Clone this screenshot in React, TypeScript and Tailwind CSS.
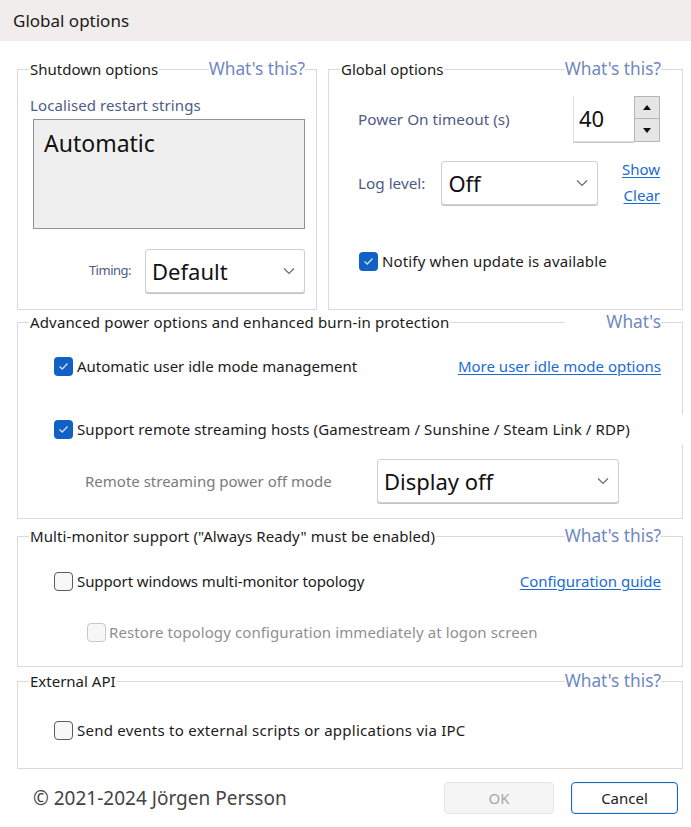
import React from 'react';

const Chevron = () => (
  <svg width="12" height="8" viewBox="0 0 12 8" className="shrink-0">
    <polyline points="1,1.5 6,6.5 11,1.5" fill="none" stroke="#6b6b6b" strokeWidth="1.2" />
  </svg>
);

const Select = ({ value, className }: { value: string; className: string }) => (
  <div
    className={`flex items-center justify-between h-[44px] bg-white border border-[#d0d0d0] rounded-[3px] shadow-[0_1px_0_#c4c4c4] pl-[6px] pr-[9px] ${className}`}
  >
    <span className="text-[22px] text-[#111] leading-none">{value}</span>
    <Chevron />
  </div>
);

const Check = ({ checked, disabled }: { checked?: boolean; disabled?: boolean }) =>
  checked ? (
    <div className="w-[19px] h-[19px] rounded-[4px] bg-[#1160c4] flex items-center justify-center shrink-0">
      <svg width="11" height="9" viewBox="0 0 11 9">
        <polyline points="1.5,4.5 4.2,7 9.5,1.5" fill="none" stroke="#cfe0f5" strokeWidth="1.3" />
      </svg>
    </div>
  ) : (
    <div
      className={`w-[19px] h-[19px] rounded-[4px] shrink-0 border ${
        disabled ? 'border-[#c8c8c8] bg-[#f7f7f7]' : 'border-[#5c5c5c] bg-[#f8f8f8]'
      }`}
    />
  );

const GroupBox = ({
  title,
  help,
  helpClass = '',
  titleClass = '',
  className,
  children,
}: {
  title: string;
  help: string;
  helpClass?: string;
  titleClass?: string;
  className: string;
  children: React.ReactNode;
}) => (
  <div className={`border border-[#dadada] ${className}`}>
    <div className="flex items-center justify-between h-[22px] -mt-[12px] leading-[22px]">
      <span className={`ml-[11px] px-[1px] bg-white text-[15px] text-[#1b1b1b] ${titleClass}`}>{title}</span>
      <span className={`bg-white text-[17.3px] text-[#6f88bf] ${helpClass}`}>{help}</span>
    </div>
    {children}
  </div>
);

const Link = ({ children }: { children: React.ReactNode }) => (
  <span className="text-[15px] text-[#1b6bd4] underline underline-offset-[2px] decoration-[1px]">{children}</span>
);

const App = () => {
  return (
    <div className="w-[691px] h-[827px] bg-white overflow-hidden font-['Noto_Sans',sans-serif]">
      {/* Title bar */}
      <div className="h-[41px] bg-[#f2eded] flex items-center pl-[13px]">
        <span className="text-[17px] text-[#1a1a1a]">Global options</span>
      </div>

      <div className="pl-[17px] w-[683px]">
        {/* Top row */}
        <div className="flex gap-[11px] mt-[28px]">
          <GroupBox title="Shutdown options" help="What's this?" helpClass="mr-[11px]" className="w-[300px] h-[241px]">
            <div className="mt-[15px] ml-[12px] text-[15px] leading-[20px] text-[#4e5b84] tracking-[0.1px]">Localised restart strings</div>
            <div className="mt-[4px] ml-[15px] w-[272px] h-[110px] bg-[#efefef] border border-[#8e9296] pl-[10px] pt-[6px]">
              <span className="text-[23px] text-[#111]">Automatic</span>
            </div>
            <div className="mt-[20px] flex items-center justify-end gap-[14px] pr-[11px]">
              <span className="text-[13px] text-[#4e5b84] tracking-[-0.5px]">Timing:</span>
              <Select value="Default" className="w-[160px]" />
            </div>
          </GroupBox>

          <GroupBox title="Global options" help="What's this?" helpClass="mr-[21px]" className="w-[355px] h-[241px]">
            <div className="mt-[16px] flex items-center justify-between pl-[29px] pr-[22px]">
              <span className="text-[15.3px] text-[#4e5b84]">Power On timeout (s)</span>
              <div className="flex h-[46px]">
                <div className="w-[61px] h-[46px] bg-white border-l border-b border-[#e0e0e0] shadow-[0_1px_0_#c4c4c4] flex items-center pl-[5px]">
                  <span className="text-[22px] text-[#111]">40</span>
                </div>
                <div className="flex flex-col w-[26px] border border-[#b5b5b5] bg-[#f2f2f2]">
                  <div className="h-[22px] border-b border-[#b5b5b5] bg-[#e6e6e6] flex items-center justify-center">
                    <svg width="8" height="5" viewBox="0 0 8 5"><polygon points="0,5 8,5 4,0" fill="#111" /></svg>
                  </div>
                  <div className="flex-1 bg-[#e6e6e6] flex items-center justify-center">
                    <svg width="8" height="5" viewBox="0 0 8 5"><polygon points="0,0 8,0 4,5" fill="#111" /></svg>
                  </div>
                </div>
              </div>
            </div>
            <div className="mt-[19px] flex items-start pl-[29px] pr-[22px]">
              <span className="text-[15.3px] text-[#4e5b84] mt-[11px]">Log level:</span>
              <Select value="Off" className="w-[157px] ml-[16px]" />
              <div className="ml-auto flex flex-col items-end leading-[26px] -mt-[5px]">
                <Link>Show</Link>
                <Link>Clear</Link>
              </div>
            </div>
            <div className="mt-[43px] flex items-center gap-[4px] pl-[30px] h-[20px]">
              <Check checked />
              <span className="text-[15px] text-[#1b1b1b] tracking-[0.15px]">Notify when update is available</span>
            </div>
          </GroupBox>
        </div>

        {/* Advanced */}
        <GroupBox
          title="Advanced power options and enhanced burn-in protection"
          titleClass="tracking-[0.15px]"
          help="What's"
          helpClass="mr-[21px] w-[96px] text-right"
          className="mt-[12px] h-[197px]"
        >
          <div className="mt-[23px] flex items-center justify-between pl-[36px] pr-[21px] h-[20px]">
            <div className="flex items-center gap-[4px]">
              <Check checked />
              <span className="text-[15px] text-[#1b1b1b]">Automatic user idle mode management</span>
            </div>
            <Link>More user idle mode options</Link>
          </div>
          <div className="mt-[38px] -mr-[1px] h-[31px] bg-white flex items-center gap-[4px] pl-[36px]">
            <Check checked />
            <span className="text-[15px] text-[#1b1b1b] tracking-[0.1px]">
              Support remote streaming hosts (Gamestream / Sunshine / Steam Link / RDP)
            </span>
          </div>
          <div className="mt-[14px] flex items-center pl-[67px]">
            <span className="text-[15px] text-[#7a7a7a] w-[292px]">Remote streaming power off mode</span>
            <Select value="Display off" className="w-[242px]" />
          </div>
        </GroupBox>

        {/* Multi-monitor */}
        <GroupBox
          title={'Multi-monitor support ("Always Ready" must be enabled)'}
          titleClass="tracking-[0.1px]"
          help="What's this?"
          helpClass="mr-[21px]"
          className="mt-[17px] h-[131px]"
        >
          <div className="mt-[24px] flex items-center justify-between pl-[36px] pr-[21px] h-[20px]">
            <div className="flex items-center gap-[4px]">
              <Check />
              <span className="text-[15px] text-[#1b1b1b] tracking-[-0.1px]">Support windows multi-monitor topology</span>
            </div>
            <Link>Configuration guide</Link>
          </div>
          <div className="mt-[31px] flex items-center gap-[3px] pl-[69px] h-[20px]">
            <Check disabled />
            <span className="text-[15px] text-[#8f8f8f] tracking-[0.1px]">
              Restore topology configuration immediately at logon screen
            </span>
          </div>
        </GroupBox>

        {/* External API */}
        <GroupBox title="External API" help="What's this?" helpClass="mr-[21px]" className="mt-[14px] h-[88px]">
          <div className="mt-[28px] flex items-center gap-[4px] pl-[36px] h-[20px]">
            <Check />
            <span className="text-[15px] text-[#1b1b1b] tracking-[0.25px]">
              Send events to external scripts or applications via IPC
            </span>
          </div>
        </GroupBox>

        {/* Footer */}
        <div className="mt-[13px] flex items-center pl-[16px] pr-[5px]">
          <span className="text-[19px] text-[#444]">© 2021-2024 Jörgen Persson</span>
          <div className="ml-auto flex gap-[17px]">
            <div className="w-[110px] h-[32px] rounded-[4px] bg-[#f5f5f5] border border-[#e6e6e6] flex items-center justify-center">
              <span className="text-[15px] text-[#a8a8a8]">OK</span>
            </div>
            <div className="w-[107px] h-[32px] rounded-[4px] bg-white border border-[#1a66c6] shadow-[inset_0_0_0_1px_#e8f0fa] flex items-center justify-center">
              <span className="text-[15px] text-[#1b1b1b]">Cancel</span>
            </div>
          </div>
        </div>
      </div>
    </div>
  );
};

export default App;
